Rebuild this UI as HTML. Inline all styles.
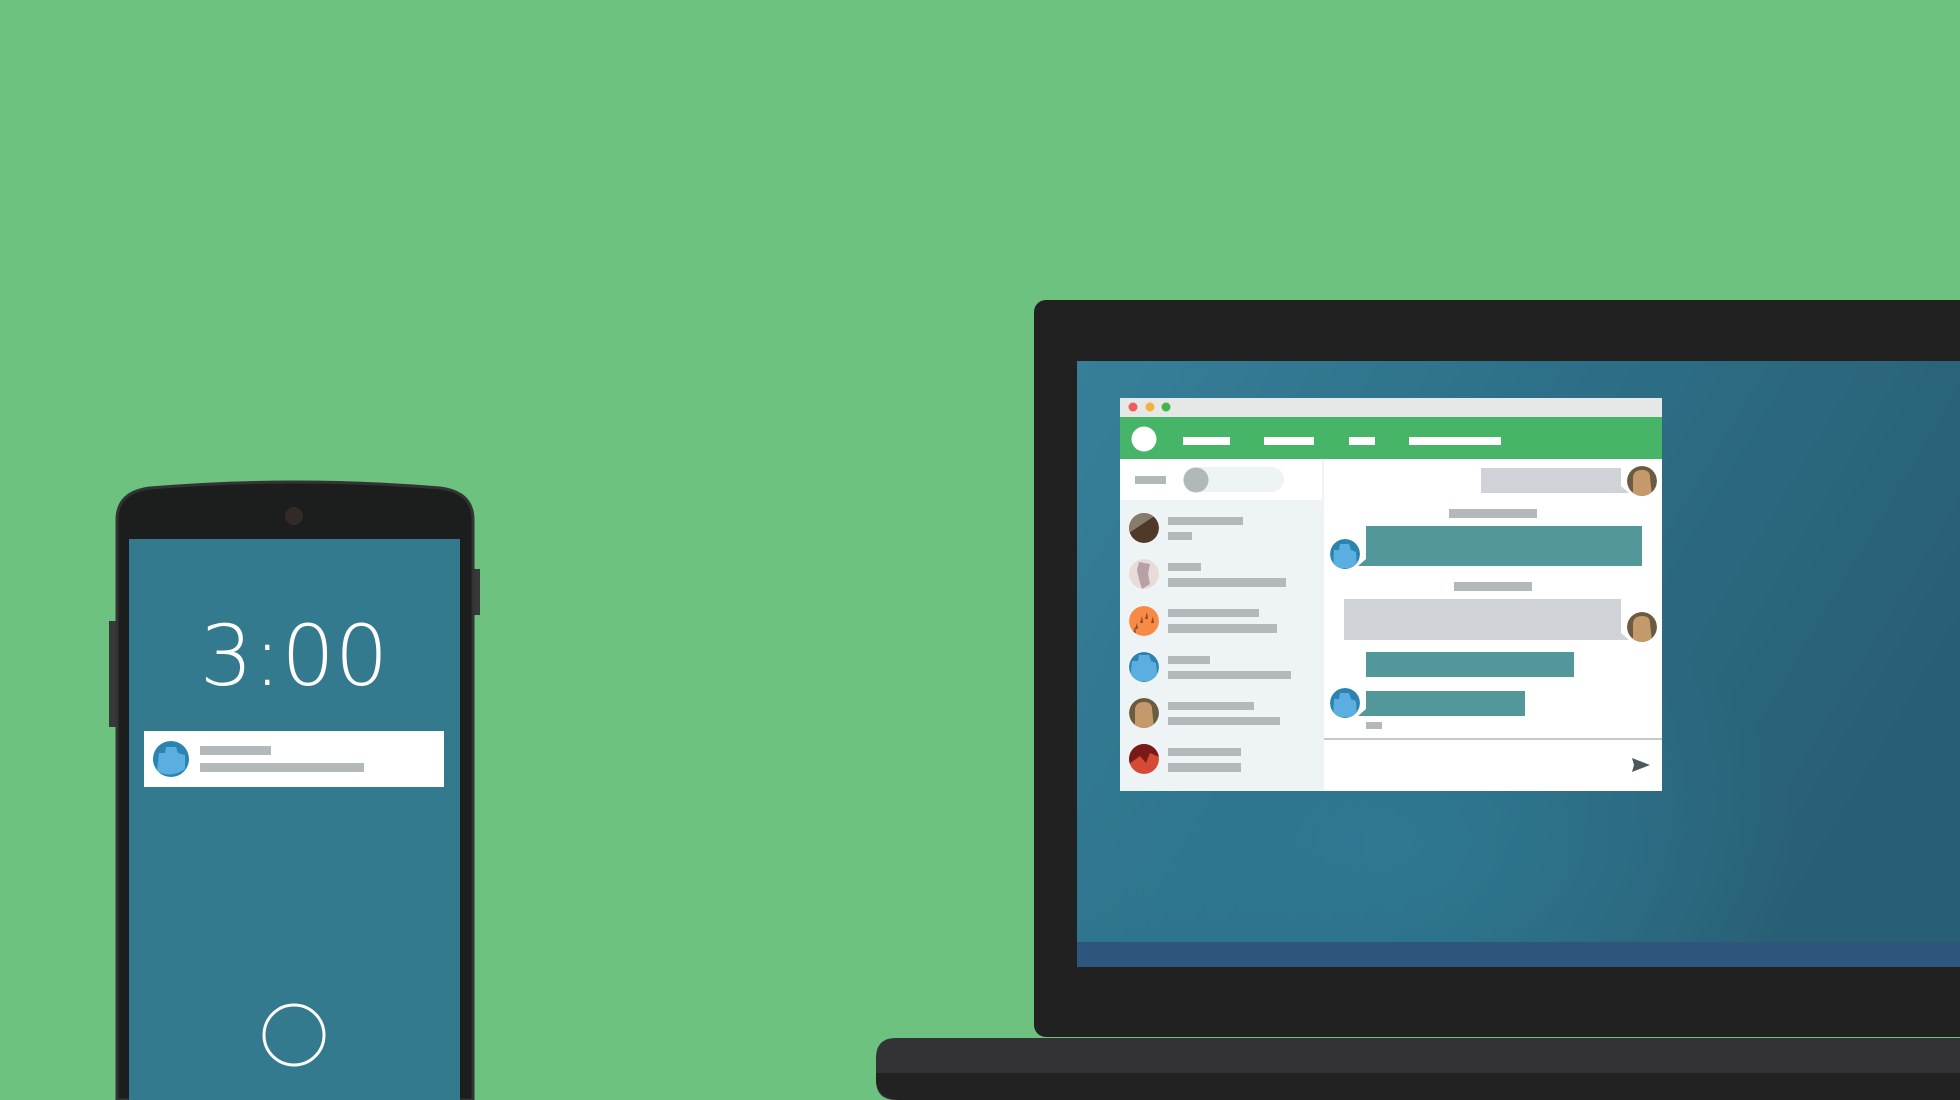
<!DOCTYPE html>
<html><head><meta charset="utf-8"><style>html,body{margin:0;padding:0;width:1960px;height:1100px;overflow:hidden;background:#6cc27e}svg{display:block}</style></head>
<body>
<svg width="1960" height="1100" viewBox="0 0 1960 1100" xmlns="http://www.w3.org/2000/svg">
<defs>
<linearGradient id="scr" x1="0" y1="0" x2="1" y2="0.4">
<stop offset="0" stop-color="#377f99"/><stop offset="0.45" stop-color="#2d7089"/><stop offset="1" stop-color="#295f74"/>
</linearGradient>
<radialGradient id="hl" cx="0.35" cy="0.8" r="0.45"><stop offset="0" stop-color="#2f7d98" stop-opacity="0.7"/><stop offset="1" stop-color="#2f7d98" stop-opacity="0"/></radialGradient>
<clipPath id="cav"><circle cx="0" cy="0" r="15"/></clipPath>
</defs>
<rect width="1960" height="1100" fill="#6cc27e"/>

<!-- Phone -->
<rect x="109" y="621" width="10" height="106" fill="#383838"/>
<rect x="470" y="569" width="10" height="46" fill="#383838"/>
<path d="M117 1100 L117 520 Q117 492 150 488 Q295 476 440 488 Q473 492 473 520 L473 1100 Z" fill="#1c1d1d" stroke="#333" stroke-width="3"/>
<rect x="129" y="539" width="331" height="561" fill="#347a8f"/>
<circle cx="294" cy="516" r="9" fill="#332a28"/>
<text x="294" y="685" text-anchor="middle" font-family="DejaVu Sans, Liberation Sans, sans-serif" font-weight="200" font-size="84" fill="#fff">3:00</text>
<rect x="144" y="731" width="300" height="56" fill="#fff"/>
<g transform="translate(171,759)"><circle r="18" fill="#2b84b0"/><path d="M-14 12 L-12 -6 L-6 -6 L-5 -12 L5 -12 L7 -6 L14 -4 L14 10 Q0 20 -14 12Z" fill="#5aaee0"/></g>
<rect x="200" y="746" width="71" height="9" fill="#b3b9bb"/>
<rect x="200" y="763" width="164" height="9" fill="#b3b9bb"/>
<circle cx="294" cy="1035" r="30" fill="none" stroke="#fff" stroke-width="3"/>

<!-- Laptop -->
<rect x="1034" y="300" width="1000" height="737" rx="12" fill="#212121"/>
<rect x="1077" y="361" width="900" height="606" fill="url(#scr)"/>
<rect x="1077" y="361" width="900" height="606" fill="url(#hl)"/>
<rect x="1077" y="942" width="900" height="25" fill="#2e567c"/>
<path d="M896 1038 H1960 V1100 H896 Q876 1100 876 1080 V1058 Q876 1038 896 1038Z" fill="#333335"/>
<path d="M876 1073 H1960 V1100 H900 Q876 1098 876 1080Z" fill="#222222"/>

<!-- App window -->
<rect x="1120" y="398" width="542" height="393" fill="#fff"/>
<rect x="1120" y="398" width="542" height="19" fill="#e6e7e7"/>
<circle cx="1133" cy="407" r="4.5" fill="#f05b5b"/>
<circle cx="1150" cy="407" r="4.5" fill="#f6b13c"/>
<circle cx="1166" cy="407" r="4.5" fill="#46b549"/>
<rect x="1120" y="417" width="542" height="42" fill="#47b567"/>
<circle cx="1144" cy="439" r="12.5" fill="#fff"/>
<rect x="1183" y="437" width="47" height="8" fill="#fff"/>
<rect x="1264" y="437" width="50" height="8" fill="#fff"/>
<rect x="1349" y="437" width="26" height="8" fill="#fff"/>
<rect x="1409" y="437" width="92" height="8" fill="#fff"/>
<!-- sidebar -->
<rect x="1120" y="500" width="202" height="291" fill="#eef3f6"/>
<rect x="1322" y="459" width="2" height="332" fill="#eef3f6"/>
<rect x="1135" y="476" width="31" height="8" fill="#b3b9bb"/>
<rect x="1183" y="467" width="101" height="25" rx="12.5" fill="#eef3f6"/>
<circle cx="1196" cy="480" r="12.5" fill="#b0b8ba"/>

<g transform="translate(1144,528)" clip-path="url(#cav)"><circle r="15" fill="#4f3a29"/><path d="M-15 -15 L15 -15 L-15 5Z" fill="#877b6c"/></g>
<g transform="translate(1144,574)" clip-path="url(#cav)"><circle r="15" fill="#e7dcd8"/><path d="M-5 -12 L6 -10 L4 0 L6 10 L-2 15 L-5 5 L-7 -4Z" fill="#b8a0a8"/></g>
<g transform="translate(1144,621)" clip-path="url(#cav)"><circle r="15" fill="#f78a47"/><path d="M-9 8 L-7 2 L-6 8Z M-4 2 L-2 -5 L-1 2Z M1 -2 L3 -9 L4 -2Z M7 2 L9 -5 L10 2Z M-11 12 L-9 6 L-8 12Z" fill="#8e4a2a"/></g>
<g transform="translate(1144,667)" clip-path="url(#cav)"><circle r="15" fill="#2b84b0"/><path d="M-14 14 L-12 -6 L-6 -6 L-5 -12 L5 -12 L7 -6 L12 -4 L14 14Z" fill="#5aaee0"/></g>
<g transform="translate(1144,713)" clip-path="url(#cav)"><circle r="15" fill="#6b5c41"/><path d="M-9 15 L-9 -4 Q-8 -11 0 -11 Q8 -11 8 -4 L10 15Z" fill="#c49a6c"/></g>
<g transform="translate(1144,759)" clip-path="url(#cav)"><circle r="15" fill="#d44a34"/><path d="M-15 -15 L15 -15 L15 -2 L6 -6 L2 4 L-4 -3 L-15 5Z" fill="#7a1a18"/></g>

<g fill="#b3b9bb">
<rect x="1168" y="517" width="75" height="8"/><rect x="1168" y="532" width="24" height="8"/>
<rect x="1168" y="563" width="33" height="8"/><rect x="1168" y="578" width="118" height="9"/>
<rect x="1168" y="609" width="91" height="8"/><rect x="1168" y="624" width="109" height="9"/>
<rect x="1168" y="656" width="42" height="8"/><rect x="1168" y="671" width="123" height="8"/>
<rect x="1168" y="702" width="86" height="8"/><rect x="1168" y="717" width="112" height="8"/>
<rect x="1168" y="748" width="73" height="8"/><rect x="1168" y="763" width="73" height="9"/>
</g>

<!-- chat -->
<path d="M1481 468 H1621 V486 L1629 493 H1481Z" fill="#cfd3d8"/>
<g transform="translate(1642,481)" clip-path="url(#cav)"><circle r="15" fill="#6b5c41"/><path d="M-9 15 L-9 -4 Q-8 -11 0 -11 Q8 -11 8 -4 L10 15Z" fill="#c49a6c"/></g>
<rect x="1449" y="509" width="88" height="9" fill="#b3b9bb"/>
<path d="M1366 526 H1642 V566 H1358 L1366 559Z" fill="#52979a"/>
<g transform="translate(1345,554)" clip-path="url(#cav)"><circle r="15" fill="#2b84b0"/><path d="M-12 14 L-11 -4 L-6 -4 L-5 -10 L4 -10 L6 -4 L11 -2 L12 14Z" fill="#5aaee0"/></g>
<rect x="1454" y="582" width="78" height="9" fill="#b3b9bb"/>
<path d="M1344 599 H1621 V633 L1629 640 H1344Z" fill="#cfd3d8"/>
<g transform="translate(1642,627)" clip-path="url(#cav)"><circle r="15" fill="#6b5c41"/><path d="M-9 15 L-9 -4 Q-8 -11 0 -11 Q8 -11 8 -4 L10 15Z" fill="#c49a6c"/></g>
<rect x="1366" y="652" width="208" height="25" fill="#52979a"/>
<path d="M1366 691 H1525 V716 H1358 L1366 709Z" fill="#52979a"/>
<g transform="translate(1345,703)" clip-path="url(#cav)"><circle r="15" fill="#2b84b0"/><path d="M-12 14 L-11 -4 L-6 -4 L-5 -10 L4 -10 L6 -4 L11 -2 L12 14Z" fill="#5aaee0"/></g>
<rect x="1366" y="722" width="16" height="7" fill="#b3b9bb"/>
<rect x="1324" y="738" width="338" height="2" fill="#c5c9cc"/>
<path d="M1632 758 L1650 765 L1632 772 L1634 765Z" fill="#4d5a5c"/>
</svg>
</body></html>
